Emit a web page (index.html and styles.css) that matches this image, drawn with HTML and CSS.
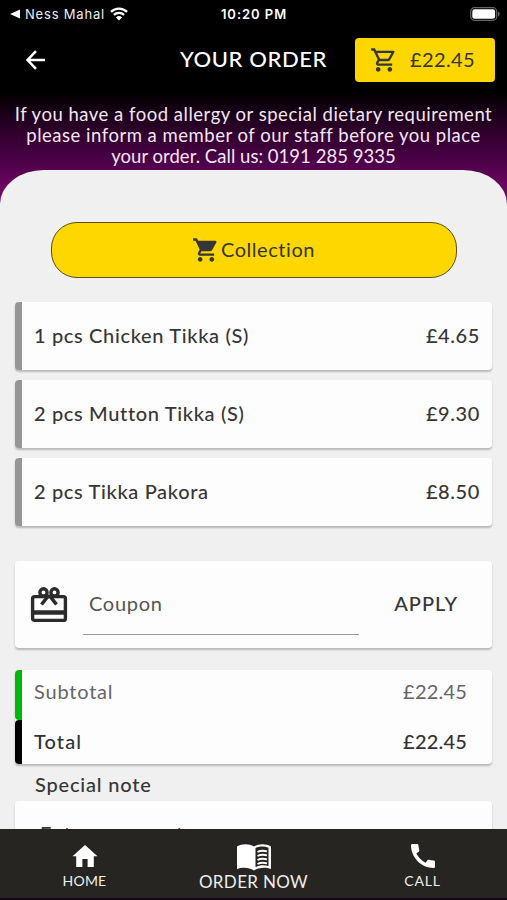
FILE: index.html
```html
<!DOCTYPE html>
<html lang="en">
<head>
<meta charset="utf-8">
<title>Your Order</title>
<link rel="stylesheet" href="styles.css">
</head>
<body>
<div class="app">
  <header class="top">
    <div class="status">
      <div class="status-left">
        <svg class="tri" viewBox="0 0 10 10"><path d="M0 5L10 .5V9.500z"/></svg>
        <span class="carrier">Ness Mahal</span>
        <svg class="wifi" viewBox="0 0 18 14"><path d="M1 4.800a11.500 11.500 0 0 1 16 0M3.900 7.900a7.400 7.400 0 0 1 10.200 0" fill="none" stroke="#fff" stroke-width="2.300"/><path d="M9 13.500L5.900 10.400a4.500 4.500 0 0 1 6.200 0z" fill="#fff"/></svg>
      </div>
      <span class="clock">10:20 PM</span>
      <svg class="battery" viewBox="0 0 30 14"><rect x=".7" y=".7" width="26" height="12.600" rx="3.800" fill="none" stroke="#666" stroke-width="1.200"/><rect x="2.300" y="2.300" width="22.800" height="9.400" rx="2.300" fill="#fff"/><path d="M28 4.600c2.200 1 2.200 3.800 0 4.800z" fill="#666"/></svg>
    </div>
    <div class="bar">
      <svg class="back" viewBox="0 0 20 20"><path d="M19 10H1.800M10 1.200L1.500 10l8.500 8.800" fill="none" stroke="#fff" stroke-width="2.500"/></svg>
      <h1 class="title">YOUR ORDER</h1>
      <div class="basket">
        <svg class="cart" viewBox="0 0 24 24"><path d="M15.550 13c.75 0 1.410-.41 1.750-1.030l3.580-6.490A.996.996 0 0 0 20.010 4H5.210l-.94-2H1v2h2l3.600 7.590-1.350 2.440C4.520 15.370 5.480 17 7 17h12v-2H7l1.100-2h7.450zM6.160 6h12.150l-2.760 5H8.530L6.160 6zM7 18c-1.100 0-1.990.9-1.990 2S5.900 22 7 22s2-.9 2-2-.9-2-2-2zm10 0c-1.100 0-1.990.9-1.990 2s.89 2 1.990 2 2-.9 2-2-.9-2-2-2z"/></svg>
        <span>£22.45</span>
      </div>
    </div>
    <p class="notice"><span>If you have a food allergy or special dietary requirement</span><span>please inform a member of our staff before you place</span><span class="phone">your order. Call us: 0191 285 9335</span></p>
  </header>
  <main class="sheet">
    <button class="collect">
      <svg class="cart" viewBox="0 0 24 24"><path d="M7 18c-1.100 0-1.990.9-1.990 2S5.900 22 7 22s2-.9 2-2-.9-2-2-2zM1 2v2h2l3.600 7.590-1.350 2.450c-.16.28-.25.61-.25.960 0 1.100.9 2 2 2h12v-2H7.420c-.14 0-.25-.11-.25-.25l.03-.12.9-1.630h7.450c.75 0 1.410-.41 1.750-1.030l3.580-6.490A1 1 0 0 0 20 4H5.210l-.94-2H1zm16 16c-1.100 0-1.990.9-1.990 2s.89 2 1.990 2 2-.9 2-2-.9-2-2-2z"/></svg>
      <span>Collection</span>
    </button>
    <div class="items">
      <div class="card item"><span>1 pcs Chicken Tikka (S)</span><span class="price">£4.65</span></div>
      <div class="card item"><span>2 pcs Mutton Tikka (S)</span><span class="price">£9.30</span></div>
      <div class="card item"><span>2 pcs Tikka Pakora</span><span class="price">£8.50</span></div>
    </div>
    <div class="card coupon">
      <svg class="gift" viewBox="0 0 38 36"><g fill="none" stroke="#2b2b2b" stroke-width="3.400"><rect x="2.600" y="9.600" width="32.800" height="23.800" rx="2"/><circle cx="13.500" cy="5.400" r="3.600"/><circle cx="24.500" cy="5.400" r="3.600"/><path d="M19 8l-7.500 9.500M19 8l7.500 9.500" stroke-width="3.600"/><path d="M2 25.500h34" stroke-width="4.600"/></g></svg>
      <div class="field"><span>Coupon</span></div>
      <span class="apply">APPLY</span>
    </div>
    <div class="card totals">
      <div class="row sub"><span>Subtotal</span><span class="amt">£22.45</span></div>
      <div class="row total"><span>Total</span><span class="amt">£22.45</span></div>
    </div>
    <div class="note-label"><span>Special note</span></div>
    <div class="card note"><span>Enter comment</span></div>
  </main>
  <nav class="nav">
    <div class="tab home"><svg viewBox="0 0 26 24"><path d="M13 1L.5 12.200h3.700V23h6.200v-8h5.200v8h6.200V12.200h3.700z" fill="#fff"/></svg><span>HOME</span></div>
    <div class="tab order"><svg viewBox="0 0 36 28"><path d="M1 3.500C6 .5 13 .5 18 3.500 23 .5 30 .5 35 3.500V26c-5-2-12-2-17 1.500C13 24 6 24 1 26z" fill="#fff"/><path d="M19.500 5C23.500 3 28.500 3 32.500 4.800V23c-4-1-9-1-13 1.200z" fill="#262521"/><path d="M21.500 9c3-1.500 6-1.500 9.500-.6M21.500 13c3-1.500 6-1.500 9.500-.6M21.500 17c3-1.500 6-1.500 9.500-.6M21.500 21c3-1.500 6-1.500 9.500-.6" fill="none" stroke="#fff" stroke-width="1.900"/></svg><span>ORDER NOW</span></div>
    <div class="tab call"><svg viewBox="3 3 18 18"><path d="M20.010 15.380c-1.230 0-2.420-.2-3.530-.56a.977.977 0 0 0-1.010.24l-1.570 1.970c-2.830-1.350-5.480-3.900-6.890-6.830l1.950-1.660c.27-.28.35-.67.24-1.020-.37-1.110-.56-2.300-.56-3.530 0-.54-.45-.99-.99-.99H4.190C3.650 3 3 3.240 3 3.990 3 13.280 10.730 21 20.010 21c.71 0 .99-.63.99-1.180v-3.450c0-.54-.45-.99-.99-.99z" fill="#fff"/></svg><span>CALL</span></div>
  </nav>
</div>
</body>
</html>
```
FILE: styles.css
```css
* { box-sizing: border-box; }
body { margin: 0; background: #000; }
svg { display: block; flex: none; }
span { white-space: nowrap; }
.app {
  width: 507px; height: 900px; overflow: hidden;
  display: flex; flex-direction: column;
  font: 500 20px/24px Lato, "Liberation Sans", sans-serif; color: #363636;
  background: linear-gradient(#000 92px, #22001f 120px, #480044 157px, #7b0a70 202px, #000 240px);
}
.top { height: 170px; flex: none; color: #fff; }
.status {
  height: 28px; padding: 0 8px 0 10px;
  display: grid; grid-template-columns: 1fr auto 1fr; align-items: center;
  font: 500 13px/16px Inter, sans-serif;
}
.status-left { display: flex; align-items: center; }
.tri { width: 10px; height: 10px; fill: #fff; margin-right: 5px; }
.carrier { font-weight: 400; letter-spacing: .8px; color: #eee; }
.wifi { width: 18px; height: 14px; margin-left: 5px; }
.clock { font-weight: 600; letter-spacing: .95px; margin: 0 1px 0 0; }
.battery { width: 30px; height: 14px; justify-self: end; margin-right: -1px; }
.bar {
  height: 64px; padding: 0 12px;
  display: grid; grid-template-columns: 1fr auto 1fr; align-items: center;
}
.back { width: 20px; height: 20px; margin-left: 14px; }
.title { margin: -3px 0 0; font-size: 22px; font-weight: 500; letter-spacing: .6px; }
.basket {
  justify-self: end; width: 140px; height: 44px; padding: 0 15px 1px; border-radius: 4px;
  display: flex; align-items: center; gap: 12px;
  background: #fed700; color: #363636; letter-spacing: .4px; font-weight: 400;
}
.basket span { margin-top: -2px; }
.cart { width: 28px; height: 28px; fill: #363636; }
.notice {
  margin: 12px 0 0; display: flex; flex-direction: column; align-items: center;
  font-size: 18.5px; font-weight: 400; line-height: 21px; color: #f3e6f3; letter-spacing: .51px;
}
.phone { letter-spacing: .03px; }
.sheet {
  flex: 1; min-height: 0; overflow: hidden; padding: 52px 15px 0;
  border-radius: 44px 44px 0 0 / 34px 34px 0 0; background: #f0f0f0;
}
.collect {
  width: 406px; height: 56px; margin: 0 auto 24px; padding: 0;
  display: flex; align-items: center; justify-content: center;
  border: 1px solid #5d5010; border-radius: 26px;
  background: #fed700; color: #363636; font: inherit; font-weight: 400; letter-spacing: .55px;
}
.collect span { margin: -2px 0 0 1px; }
.card { background: #fdfdfd; border-radius: 4px; box-shadow: 0 2px 2px rgba(0,0,0,.23); }
.items { display: flex; flex-direction: column; gap: 10px; }
.item {
  height: 68px; padding: 0 12px 3px 12px; border-left: 7px solid #969696;
  display: flex; align-items: center; justify-content: space-between; letter-spacing: .65px;
}
.price { letter-spacing: .6px; }
.coupon {
  height: 87px; margin-top: 35px; padding: 0 34px 0 15px;
  display: flex; align-items: center;
}
.gift { width: 38px; height: 36px; }
.field {
  width: 276px; height: 60px; margin-left: 15px; padding: 0 6px 2px;
  display: flex; align-items: center; border-bottom: 1px solid #999;
  color: #555; font-weight: 400; letter-spacing: .7px;
}
.apply { margin-left: auto; letter-spacing: 1px; padding-bottom: 3px; }
.totals { margin-top: 22px; height: 94px; }
.row {
  display: flex; align-items: center; justify-content: space-between;
  padding: 0 25px 2px 12px; border-left: 7px solid;
}
.row span { color: #333; }
.row .amt { letter-spacing: .2px; }
.sub { height: 50px; border-left-color: #00b80c; border-radius: 4px 0 0 4px; padding-bottom: 8px; font-weight: 400; letter-spacing: .8px; }
.row.sub span { color: #666; }
.total { height: 44px; border-left-color: #000; border-radius: 4px 0 0 4px; letter-spacing: 1.1px; }
.note-label { height: 37px; padding: 8px 20px 0; letter-spacing: .8px; }
.note { height: 90px; padding: 20px 25px; letter-spacing: .7px; }
.nav {
  height: 71px; flex: none; display: grid; grid-template-columns: 169px 169px 169px;
  background: #262521; border-bottom: 2px solid #17051a; color: #eee;
}
.tab { display: flex; flex-direction: column; align-items: center; font-size: 14px; line-height: 20px; font-weight: 400; }
.home { letter-spacing: .2px; }
.home svg { width: 26px; height: 24px; margin: 15px 0 3px; }
.order { font-size: 17px; letter-spacing: .35px; }
.order svg { width: 36px; height: 28px; margin: 14px 0 1px; }
.call { letter-spacing: .8px; }
.call svg { width: 24px; height: 24px; margin: 15px 0 3px; }
```
